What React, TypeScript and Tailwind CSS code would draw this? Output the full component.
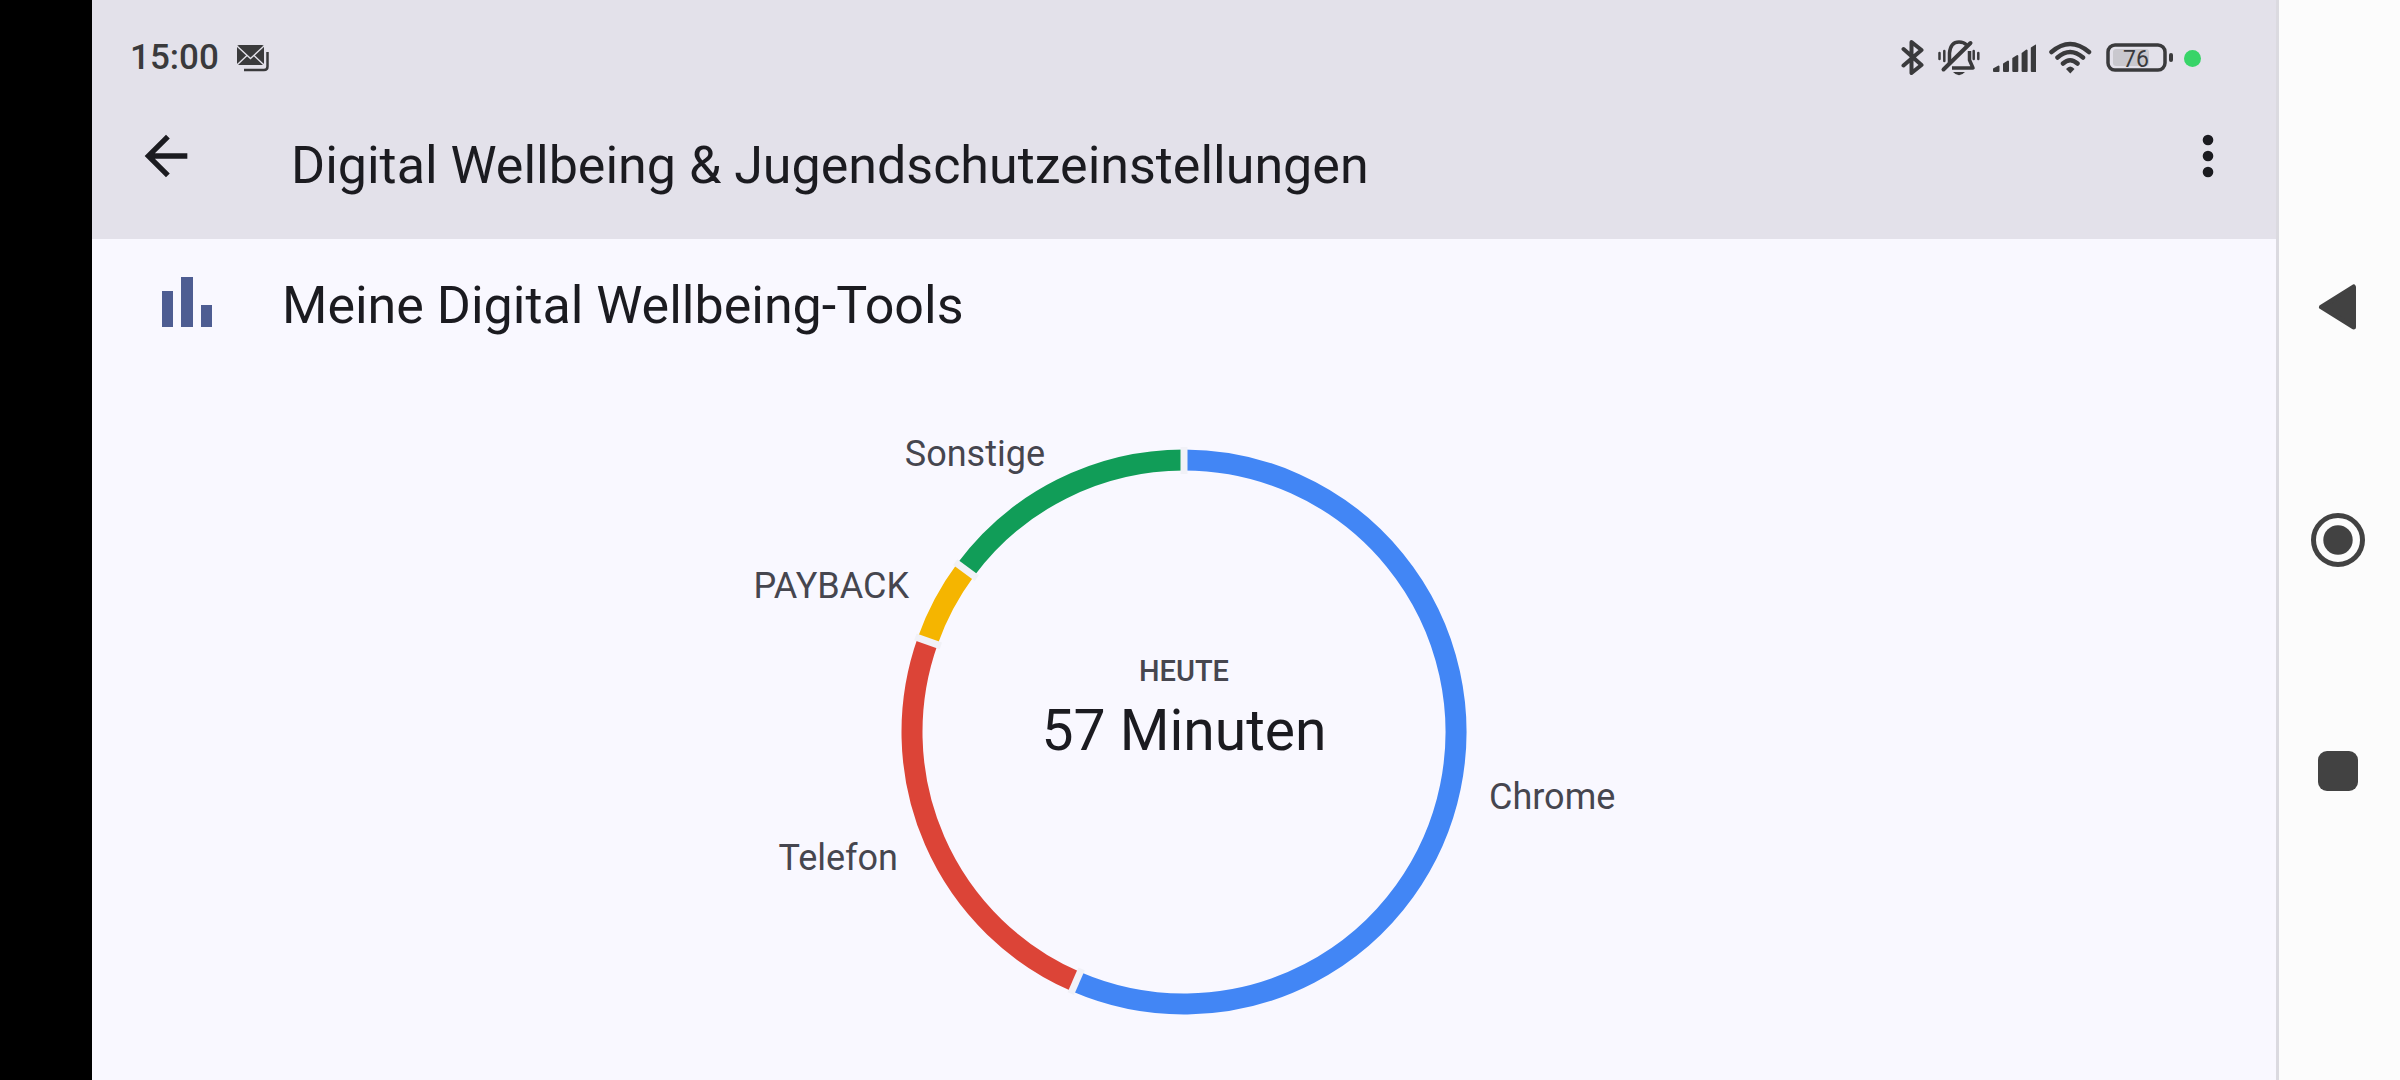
const CX = 500;
const CY = 320;
const RADIUS = 272;

type Slice = {
  name: string;
  start: number;
  end: number;
  color: string;
  x: number;
  y: number;
  anchor: "start" | "end";
};

// angles in degrees, clockwise from the top
const slices: Slice[] = [
  { name: "Chrome", start: 0, end: 203.4, color: "#4286f5", x: 805, y: 397, anchor: "start" },
  { name: "Telefon", start: 203.4, end: 289.5, color: "#dc4437", x: 214, y: 458, anchor: "end" },
  { name: "PAYBACK", start: 289.5, end: 306.6, color: "#f5b500", x: 225, y: 186, anchor: "end" },
  { name: "Sonstige", start: 306.6, end: 360, color: "#119d58", x: 361, y: 54, anchor: "end" },
];

function point(angle: number) {
  const rad = (angle * Math.PI) / 180;
  return `${CX + RADIUS * Math.sin(rad)} ${CY - RADIUS * Math.cos(rad)}`;
}

function arc(start: number, end: number) {
  const large = end - start > 180 ? 1 : 0;
  return `M${point(start)} A${RADIUS} ${RADIUS} 0 ${large} 1 ${point(end)}`;
}

export default function App() {
  return (
    <div className="flex min-h-screen bg-black font-[Roboto,sans-serif] text-[#1b1b20]">
      <div className="ml-[92px] flex min-w-0 flex-1 flex-col bg-[#f9f8ff]">
        <header className="bg-[#e3e1ea]">
          <StatusBar />
          <div className="flex items-start pt-[46px] pb-[31px] pl-[42px] pr-[36px]">
            <button aria-label="Zurück" className="shrink-0">
              <svg className="size-16" viewBox="0 0 24 24" fill="currentColor">
                <path d="M20 11H7.83l5.59-5.59L12 4l-8 8 8 8 1.41-1.41L7.83 13H20v-2z" />
              </svg>
            </button>
            <h1 className="ml-[93px] flex-1 text-[52px] leading-[84px]">
              Digital Wellbeing &amp; Jugendschutzeinstellungen
            </h1>
            <button aria-label="Weitere Optionen" className="shrink-0">
              <svg className="size-16" viewBox="0 0 24 24" fill="currentColor">
                <circle cx="12" cy="6" r="2" />
                <circle cx="12" cy="12" r="2" />
                <circle cx="12" cy="18" r="2" />
              </svg>
            </button>
          </div>
        </header>

        <main>
          <div className="flex h-[130px] items-start pt-[35px] pl-[70px]">
            <svg className="h-14 w-[50px]" viewBox="0 -3 50 56" fill="#4e5d92">
              <rect x="0" y="14" width="11" height="36" />
              <rect x="19" y="0" width="12" height="50" />
              <rect x="39" y="28" width="11" height="22" />
            </svg>
            <h2 className="ml-[70px] text-[52px] leading-[64px]">Meine Digital Wellbeing-Tools</h2>
          </div>
          <div className="flex justify-center pt-[43px]">
            <UsageChart />
          </div>
        </main>
      </div>

      <NavBar />
    </div>
  );
}

function StatusBar() {
  return (
    <div className="flex h-[78px] items-center justify-between pt-[38px] pl-[38px] pr-[75px] text-[#3a3a3c]">
      <div className="flex items-center gap-[18px]">
        <span className="text-[35px] leading-10 font-medium">15:00</span>
        <svg className="h-10 w-8" viewBox="0 0 32 40">
          <path d="M7 32H27Q30.500 32 30.500 28.500V14" fill="none" stroke="currentColor" strokeWidth="2.500" />
          <rect x="0" y="7" width="27" height="20" rx="2" fill="currentColor" />
          <path
            d="M0 8L13.500 20.500L27 8M0 27L10 17.500M27 27L17 17.500"
            fill="none"
            stroke="#e3e1ea"
            strokeWidth="1.300"
          />
        </svg>
      </div>

      <div className="flex items-center gap-3">
        <svg className="h-10 w-6" viewBox="0 0 24 40" fill="none" stroke="currentColor" strokeWidth="4" strokeLinecap="round" strokeLinejoin="round">
          <path d="M3.500 11L21.500 27L11.500 35V4L21.500 12L3.500 27.500" />
        </svg>

        <svg className="h-10 w-11" viewBox="0 0 44 40" fill="none" stroke="currentColor">
          <path d="M13.500 25V15Q14.500 4 23 4Q28 4 30.500 7" strokeWidth="3.500" />
          <path d="M33.500 13V22L37 30H16" strokeWidth="3.500" strokeLinejoin="round" />
          <path d="M7.500 31.500L34.500 5" strokeWidth="4" strokeLinecap="round" />
          <path d="M17 34Q23 40.500 29 34Z" fill="currentColor" stroke="none" />
          <path d="M3.500 15V21M8.300 13V23M37.700 13V21M42.300 15V21" strokeWidth="2.500" strokeLinecap="round" />
        </svg>

        <svg className="h-10 w-11" viewBox="-1 0 44 40" fill="currentColor" stroke="currentColor" strokeLinejoin="round">
          <path d="M1 31L5.500 28.500V33H1ZM11 26L15 23.500V33H11ZM20.300 20.500L24.300 18V33H20.300ZM29.600 15.500L33.600 12.500V33H29.600ZM38.800 10L42.800 7.500V33H38.800Z" strokeWidth="2" />
        </svg>

        <svg className="h-10 w-11" viewBox="0 0 44 40" fill="none" stroke="currentColor" strokeWidth="4.500" strokeLinecap="round">
          <path d="M3.500 14Q22 -2 41 14M9.500 19.500Q22 8.500 35 19.500M15 25.500Q22 19 29.500 25.500" />
          <path d="M18 31Q22.300 26 26.500 31L22.300 35.500Z" fill="currentColor" stroke="none" />
        </svg>

        <div className="flex items-center gap-2">
          <svg className="h-10 w-[72px]" viewBox="0 0 72 40">
            <rect x="4" y="7" width="57" height="25" rx="7" fill="none" stroke="currentColor" strokeWidth="3.500" />
            <rect x="9" y="11" width="36" height="17" rx="3" fill="#c9c8ce" />
            <rect x="65" y="15" width="4" height="9" rx="2" fill="currentColor" />
            <text x="32" y="29" textAnchor="middle" fontSize="23" fill="currentColor">76</text>
          </svg>
          <span className="size-[17px] rounded-full bg-[#38d468]" />
        </div>
      </div>
    </div>
  );
}

function UsageChart() {
  return (
    <svg className="h-[640px] w-[1000px]" viewBox="0 0 1000 640" role="img" aria-label="Nutzung heute">
      {slices.map((s) => (
        <path key={s.name} d={arc(s.start, s.end)} fill="none" stroke={s.color} strokeWidth="21" />
      ))}
      {slices.map((s) => (
        <rect
          key={s.name}
          x={CX - 3.5}
          y={CY - 285}
          width="7"
          height="27"
          fill="#f1f1f7"
          transform={`rotate(${s.start} ${CX} ${CY})`}
        />
      ))}
      {slices.map((s) => (
        <text key={s.name} x={s.x} y={s.y} textAnchor={s.anchor} fontSize="36" fill="#46464f">
          {s.name}
        </text>
      ))}
      <text x={CX} y="269" textAnchor="middle" fontSize="29" fontWeight="500" fill="#46464f">
        HEUTE
      </text>
      <text x={CX} y="338" textAnchor="middle" fontSize="57" fill="#1b1b20">
        57 Minuten
      </text>
    </svg>
  );
}

function NavBar() {
  return (
    <nav className="flex w-[124px] shrink-0 flex-col items-center justify-center gap-[168px] border-l-[3px] border-[#dbdae0] bg-[#fcfcfc] pr-[3px] text-[#424242]">
      <button aria-label="Zurück">
        <svg className="size-16" viewBox="0 0 64 64" fill="currentColor" stroke="currentColor" strokeWidth="5" strokeLinejoin="round">
          <path d="M15.500 31L47.500 11V51Z" />
        </svg>
      </button>
      <button aria-label="Startbildschirm">
        <svg className="size-16" viewBox="0 0 64 64">
          <circle cx="32" cy="32" r="24.500" fill="none" stroke="currentColor" strokeWidth="5" />
          <circle cx="32" cy="32" r="14.700" fill="currentColor" />
        </svg>
      </button>
      <button aria-label="Letzte Apps">
        <svg className="size-16" viewBox="0 0 64 64" fill="currentColor">
          <rect x="12" y="11" width="40" height="40" rx="9" />
        </svg>
      </button>
    </nav>
  );
}
